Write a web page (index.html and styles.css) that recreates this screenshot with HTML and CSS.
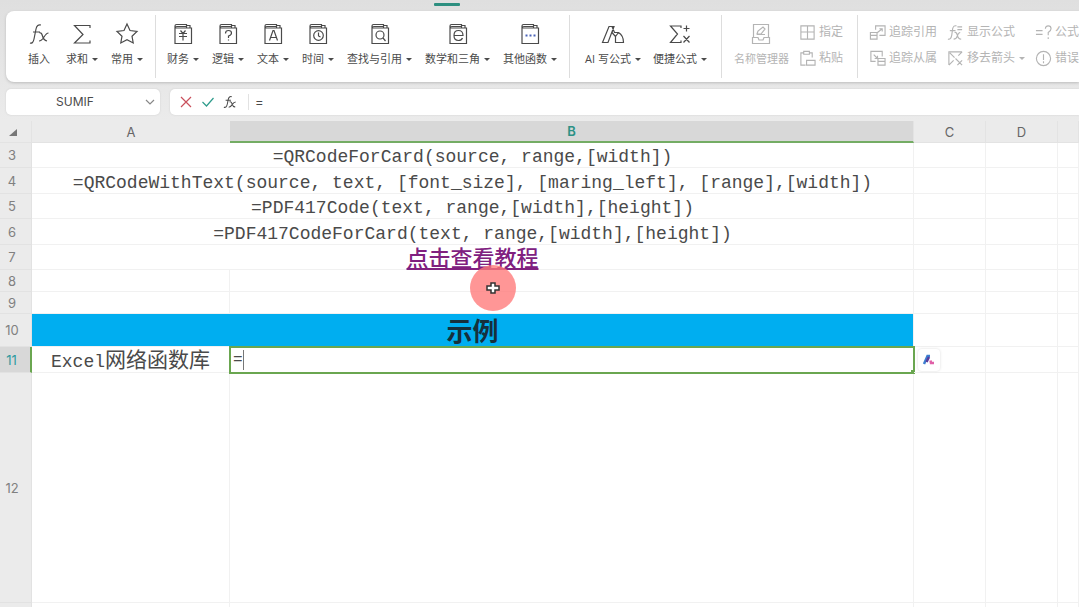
FILE: index.html
```html
<!DOCTYPE html>
<html lang="zh-CN">
<head>
<meta charset="utf-8">
<title>SUMIF</title>
<link rel="stylesheet" href="styles.css">
</head>
<body>
<svg class="defs" width="0" height="0" aria-hidden="true">
  <symbol id="book" viewBox="0 0 24 24"><path d="M4 6v15.500h16.500V6zM4 6V4Q4 2.500 5.500 2.500h10V6M4 6q0-1.500 2-1.500h9.500M15.500 3.500h3.500V6"/></symbol>
</svg>
<div class="app">
  <nav class="tabs" aria-label="公式"><span class="tab-mark"></span></nav>

  <section class="ribbon">
    <div class="group group-basic">
      <button class="tool"><svg viewBox="0 0 24 24"><path d="M3 21q3 1 4-4l2-10q1-5 5-4M6 10h7M12.500 11q2-1 3 3t4.500 5M21.500 11q-2 0-4.500 4T12 19"/></svg><span>插入</span></button>
      <button class="tool"><svg viewBox="0 0 24 24"><path d="M20 6V3.500H4.500l8.500 9L4.500 21H20v-2.500"/></svg><span class="menu">求和</span></button>
      <button class="tool"><svg viewBox="0 0 24 24"><path d="M12 2l3 6.500 7 .9-5 4.800 1.200 6.800-6.200-3.300L5.800 21 7 14.200 2 9.400l7-.9z"/></svg><span class="menu">常用</span></button>
    </div>
    <div class="group group-library">
      <button class="tool"><svg viewBox="0 0 24 24"><use href="#book"/><path d="M9.500 8.500l2.500 3 2.500-3M8 11.500h8M8 14.500h8M12 11.500v7"/></svg><span class="menu">财务</span></button>
      <button class="tool"><svg viewBox="0 0 24 24"><use href="#book"/><path d="M9.500 11.500q0-3 3-3t3 2.500q0 2-3 3v2M12.500 17.500v1"/></svg><span class="menu">逻辑</span></button>
      <button class="tool"><svg viewBox="0 0 24 24"><use href="#book"/><path d="M8.500 18.500l3.500-10h1l3.500 10M9.500 15.500h6"/></svg><span class="menu">文本</span></button>
      <button class="tool"><svg viewBox="0 0 24 24"><use href="#book"/><circle cx="12.500" cy="13.500" r="4.800"/><path d="M12.500 10.500v3.500l2 1"/></svg><span class="menu">时间</span></button>
      <button class="tool"><svg viewBox="0 0 24 24"><use href="#book"/><circle cx="12" cy="13" r="4"/><path d="M15 16l2.500 3"/></svg><span class="menu">查找与引用</span></button>
      <button class="tool"><svg viewBox="0 0 24 24"><use href="#book"/><path d="M8 13.500h9q0-5-4.500-5t-4.500 5q0 5 4.500 5 3 0 4-2.500"/></svg><span class="menu">数学和三角</span></button>
      <button class="tool"><svg viewBox="0 0 24 24"><use href="#book"/><path class="dots" d="M7.500 13.500h2M11.500 13.500h2M15.500 13.500h2"/></svg><span class="menu">其他函数</span></button>
    </div>
    <div class="group group-smart">
      <button class="tool"><svg viewBox="0 0 24 24"><path d="M1.500 20.500L8 4.500h5l-6 16zM13 4.500l-2 6 3.500 4v6h8q0-7-5-10l-4 0L11 4.500M14.500 14.500l3-4"/></svg><span class="menu">AI 写公式</span></button>
      <button class="tool"><svg viewBox="0 0 24 24"><path d="M13 6V4H2.500L9.500 12l-7 8.500H13v-2M18.500 3.500v6M15.500 6.500h6M15.500 14l6 6.500M21.500 14l-6 6.500"/></svg><span class="menu">便捷公式</span></button>
    </div>
    <div class="group group-names">
      <button class="tool" disabled><svg viewBox="0 0 24 24"><path d="M4.500 15V2.500h15V15M3.500 15.500h5.500l1 2.500h4l1-2.500h5.500v6h-17zM8 12l1-3 5-4 2 2-4 5zM8 12.500h8"/></svg><span>名称管理器</span></button>
      <div class="stack">
        <button class="line" disabled><svg viewBox="0 0 18 18"><path d="M2 2h14v14H2zM9 2v14M2 8.500h14"/></svg>指定</button>
        <button class="line" disabled><svg viewBox="0 0 18 18"><path d="M7 16H2V3h3M11 3h3v5M5 1.500h6v3H5zM8 11h9v5H8z"/></svg>粘贴</button>
      </div>
    </div>
    <div class="group group-audit">
      <div class="stack">
        <button class="line" disabled><svg viewBox="0 0 18 18"><path d="M7 6V2h10v10h-6M1.500 9h7v7h-7zM1.500 12h7M9 9l5-4M11 5h3v3"/></svg>追踪引用</button>
        <button class="line" disabled><svg viewBox="0 0 18 18"><path d="M7 12H2V1.500h12V7M9.500 9h7.500v7H9.500zM9.500 12H17M5 5l4 4M9 6v3H6"/></svg>追踪从属</button>
      </div>
      <div class="stack">
        <button class="line" disabled><svg viewBox="0 0 18 18"><path d="M1 16q3 1 4-4l1-7q1-4 4-3M3 7h6M8 9q2-1 3 3t4 4M14 9q-2 0-3 3.500T7 16M11 3h5M11 6h5"/></svg>显示公式</button>
        <button class="line menu" disabled><svg viewBox="0 0 18 18"><path d="M2 16V2h14M3 3l5 5M2 16l5-5M9 9l7 7M16 11l-5 5M16 2l-4 4"/></svg>移去箭头</button>
      </div>
      <div class="stack">
        <button class="line" disabled><svg viewBox="0 0 18 18"><path d="M1 7h7M1 11h7M11 5q0-3 3-3t3 3q0 2-3 4v3M14 14v2"/></svg>公式</button>
        <button class="line" disabled><svg viewBox="0 0 18 18"><circle cx="9" cy="9" r="7.500"/><path d="M9 4.500v6M9 12v2"/></svg>错误</button>
      </div>
    </div>
  </section>

  <section class="formula-row">
    <div class="name-box">
      <input type="text" value="SUMIF" aria-label="名称框">
      <button aria-label="展开"><svg viewBox="0 0 12 12"><path d="M2 4l4 4 4-4"/></svg></button>
    </div>
    <div class="formula-bar">
      <button class="cancel" aria-label="取消"><svg viewBox="0 0 14 14"><path d="M2 2l10 10M12 2L2 12"/></svg></button>
      <button class="accept" aria-label="确认"><svg viewBox="0 0 14 14"><path d="M1.500 7l4 4 7-8"/></svg></button>
      <button class="fx" aria-label="插入函数"><svg viewBox="0 0 16 16"><path d="M1 14q3 1 4-4l1-5q1-4 4-3M3 6h6M7.500 8q2-1 3 2.500t3.500 3M14.500 8q-2 0-4 3T6.500 14"/></svg></button>
      <input type="text" value="=" aria-label="编辑栏">
    </div>
  </section>

  <table class="sheet">
    <colgroup><col class="col-head"><col class="col-a"><col class="col-b"><col class="col-c"><col class="col-c"><col></colgroup>
    <thead>
      <tr><th><svg class="corner" viewBox="0 0 10 10"><path d="M9 2v7H1z"/></svg></th><th>A</th><th class="active">B</th><th>C</th><th>D</th><th></th></tr>
    </thead>
    <tbody>
      <tr class="short"><th>3</th><td colspan="2" class="code">=QRCodeForCard(source, range,[width])</td><td></td><td></td><td></td></tr>
      <tr class="tall"><th>4</th><td colspan="2" class="code">=QRCodeWithText(source, text, [font_size], [maring_left], [range],[width])</td><td></td><td></td><td></td></tr>
      <tr class="short"><th>5</th><td colspan="2" class="code">=PDF417Code(text, range,[width],[height])</td><td></td><td></td><td></td></tr>
      <tr class="tall"><th>6</th><td colspan="2" class="code">=PDF417CodeForCard(text, range,[width],[height])</td><td></td><td></td><td></td></tr>
      <tr class="short"><th>7</th><td colspan="2" class="tutorial"><a href="#">点击查看教程</a></td><td></td><td></td><td></td></tr>
      <tr class="slim"><th>8</th><td></td><td class="pointer-cell"><svg class="pointer" viewBox="0 0 46 46"><circle cx="23" cy="23" r="23"/><path d="M21 18h4v3h4v4h-4v3h-4v-3h-4v-4h4z"/></svg></td><td></td><td></td><td></td></tr>
      <tr class="slim"><th>9</th><td></td><td></td><td></td><td></td><td></td></tr>
      <tr class="banner"><th>10</th><td colspan="2">示例</td><td></td><td></td><td></td></tr>
      <tr class="tall"><th class="active">11</th><td class="subject"><span>Excel</span>网络函数库</td>
        <td class="editing"><div class="editor"><input type="text" value="=" aria-label="B11"><i class="caret"></i><i class="handle"></i></div></td>
        <td class="assist-cell"><button class="assist" aria-label="AI 写公式"><svg viewBox="0 0 14 14"><path class="blue" d="M2 11L5.500 3H8"/><path class="violet" d="M4.500 9L7 4"/><path class="pink" d="M8.500 7.500l.5 2.500h3"/></svg></button></td><td></td><td></td></tr>
      <tr class="large"><th>12</th><td></td><td></td><td></td><td></td><td></td></tr>
      <tr class="short"><th></th><td></td><td></td><td></td><td></td><td></td></tr>
    </tbody>
  </table>
</div>
</body>
</html>
```

FILE: styles.css
```css
* { box-sizing: border-box; }
body {
  margin: 0;
  overflow: hidden;
  background: #ebebeb;
  color: #4a4a4a;
  font: 13px/20px Inter, "Noto Sans CJK SC", sans-serif;
}
button, input {
  margin: 0;
  padding: 0;
  border: 0;
  background: none;
  color: inherit;
  font: inherit;
  outline: none;
}
svg { fill: none; stroke: currentColor; stroke-width: 1.200; }
.defs { position: absolute; }
.app {
  display: flex;
  flex-direction: column;
  height: 100vh;
  overflow: hidden;
  background: linear-gradient(#dfdfdf, #ebebeb 120px);
}
.tabs { height: 11px; flex: none; padding: 3px 0 0 434px; }
.tab-mark { display: block; width: 26px; height: 3px; border-radius: 1px; background: #2d8f80; }

.ribbon {
  display: flex;
  flex: none;
  height: 71px;
  margin-left: 6px;
  padding: 4px 0;
  overflow: hidden;
  border-radius: 8px 0 0 8px;
  background: #fff;
  box-shadow: 0 1px 3px #bbb;
  font-family: "Open Sans", "Noto Sans CJK SC", sans-serif;
  font-size: 11px;
  line-height: 14px;
}
.group {
  display: flex;
  flex: none;
  align-items: flex-start;
  gap: 13px;
  padding: 7px 12px 0;
  border-right: 1px solid #ddd;
}
.group:last-child { border: 0; }
.group-basic { padding-left: 19px; }
.group-library { padding-left: 11px; }
.group-smart { gap: 12px; padding-right: 14px; padding-left: 15px; }
.group-names { gap: 10px; padding-right: 14px; }
.group-audit { gap: 10px; padding-left: 11px; }
.tool { display: flex; flex-direction: column; align-items: center; gap: 6px; white-space: nowrap; }
.group-basic .tool:first-child { padding: 0 2px; }
.tool svg { width: 24px; height: 24px; }
.dots { stroke: #4a63b8; stroke-width: 2; }
.menu::after {
  content: "";
  display: inline-block;
  margin-left: 4px;
  border: 3px solid transparent;
  border-top-color: currentColor;
  border-bottom: 0;
  vertical-align: 2px;
}
.stack { display: flex; flex-direction: column; gap: 6px; }
.line { display: flex; align-items: center; height: 20px; font-size: 12px; white-space: nowrap; }
.line svg { width: 17px; height: 17px; margin-right: 3px; }
button:disabled { color: #b4b4b4; }

.formula-row { display: flex; flex: none; gap: 10px; padding: 7px 0 6px 6px; }
.name-box, .formula-bar {
  display: flex;
  align-items: center;
  height: 26px;
  border-radius: 5px;
  background: #fff;
  box-shadow: 0 0 2px #ccc;
}
.name-box { width: 154px; padding-right: 4px; font-size: 12px; }
.name-box input { flex: 1; min-width: 0; text-align: center; }
.name-box svg { display: block; width: 12px; height: 12px; color: #888; }
.formula-bar { flex: 1; gap: 8px; padding-left: 9px; border-radius: 5px 0 0 5px; }
.formula-bar svg { display: block; width: 14px; height: 14px; }
.cancel { color: #c9505c; }
.accept { color: #2f9c8c; }
.formula-bar input { flex: 1; height: 16px; margin-left: 3px; padding-left: 6px; border-left: 1px solid #e2e2e2; }

.sheet { width: 100%; flex: none; table-layout: fixed; border-collapse: separate; border-spacing: 0; background: #fff; }
.col-head { width: 32px; }
.col-a { width: 198px; }
.col-b { width: 684px; }
.col-c { width: 72px; }
th, td { padding: 0; border: 0 solid #f1f1f1; border-width: 0 1px 1px 0; }
th { background: #ebebeb; color: #808080; font-weight: 400; }
thead th { height: 22px; border-color: #e3e3e3; font-size: 13px; color: #666; }
thead .active { background: #d8d8d8; border-bottom: 2px solid #74ac64; color: #2d9185; font-weight: 600; }
thead th:nth-child(2) { border-right: 0; }
tbody th { padding-right: 7px; border-color: #e2e2e2; }
tbody th.active { background: #d8d8d8; border-right: 2px solid #6aa650; color: #2d9aa0; }
.corner { display: block; width: 10px; height: 10px; margin-left: 8px; fill: #777; stroke: none; }
.short { height: 25px; }
.tall { height: 26px; }
.slim { height: 22px; }
.large { height: 230px; }
.code {
  padding-top: 4px;
  text-align: center;
  white-space: nowrap;
  vertical-align: bottom;
  font-family: "Liberation Mono", monospace;
  font-size: 18px;
}
.tutorial { padding-top: 2px; text-align: center; font-size: 22px; font-weight: 500; }
.tutorial a { color: #80207f; text-decoration-thickness: 2px; text-underline-offset: 2px; }
.slim th { line-height: 18px; }
.pointer-cell { position: relative; }
.pointer { position: absolute; z-index: 2; left: 240px; top: -5px; width: 46px; height: 46px; stroke: none; }
.pointer circle { fill: #ff7878; fill-opacity: .78; }
.pointer path { fill: #fff; stroke: #333; stroke-width: 1.500; }
.banner { height: 33px; }
.banner td[colspan] { padding-top: 4px; background: #00aef0; color: #16303c; text-align: center; font-size: 26px; font-weight: 700; }
.subject { padding-top: 2px; text-align: center; font-size: 21px; white-space: nowrap; }
.subject span { font-family: "Liberation Mono", monospace; font-size: 18px; }
.editing, .assist-cell { position: relative; }
.editor {
  position: absolute;
  inset: -1px -2px -2px -1px;
  display: flex;
  align-items: center;
  padding-left: 2px;
  border: 2px solid #6aa650;
  background: #fff;
}
.editor input { width: 10px; font-family: "Liberation Mono", monospace; font-size: 16px; }
.caret { width: 1px; height: 20px; background: #777; }
.handle { position: absolute; right: -2px; bottom: -2px; width: 4px; height: 4px; background: #6aa650; }
.assist {
  position: absolute;
  left: 4px;
  top: 2px;
  display: grid;
  place-items: center;
  width: 22px;
  height: 22px;
  border-radius: 4px;
  background: #fff;
  box-shadow: 0 0 3px #ddd;
}
.assist svg { width: 14px; height: 14px; stroke-width: 2.500; }
.blue { stroke: #3d7fd0; }
.violet { stroke: #5a3c9c; }
.pink { stroke: #e060a8; }
```
